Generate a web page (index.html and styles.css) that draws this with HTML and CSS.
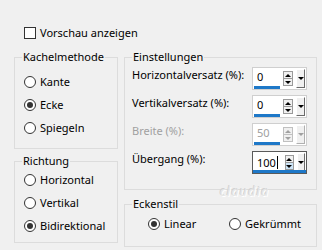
FILE: index.html
```html
<!DOCTYPE html>
<html>
<head>
<meta charset="utf-8">
<link rel="stylesheet" href="styles.css">
</head>
<body>
<div class="dialog">
  <div class="check"><span class="box"></span><span>Vorschau anzeigen</span></div>
  <div class="cols">
    <div class="col left">
      <fieldset class="group g-kachel">
        <legend>Kachelmethode</legend>
        <div class="radio"><span class="rb"></span>Kante</div>
        <div class="radio"><span class="rb on"></span>Ecke</div>
        <div class="radio"><span class="rb"></span>Spiegeln</div>
      </fieldset>
      <fieldset class="group g-richtung">
        <legend>Richtung</legend>
        <div class="radio"><span class="rb"></span>Horizontal</div>
        <div class="radio"><span class="rb"></span>Vertikal</div>
        <div class="radio"><span class="rb on"></span>Bidirektional</div>
      </fieldset>
    </div>
    <div class="col right">
      <fieldset class="group g-einst">
        <legend>Einstellungen</legend>
        <div class="row"><span class="lbl">Horizontalversatz (%):</span>
          <div class="spinner"><span class="field">0</span><span class="spin"><span class="sb up"></span><span class="sb down"></span></span><span class="drop"></span></div>
        </div>
        <div class="row"><span class="lbl">Vertikalversatz (%):</span>
          <div class="spinner"><span class="field">0</span><span class="spin"><span class="sb up"></span><span class="sb down"></span></span><span class="drop"></span></div>
        </div>
        <div class="row"><span class="lbl dis">Breite (%):</span>
          <div class="spinner disabled"><span class="field">50</span><span class="spin"><span class="sb up"></span><span class="sb down"></span></span><span class="drop"></span></div>
        </div>
        <div class="row"><span class="lbl">Übergang (%):</span>
          <div class="spinner focus"><span class="field">100<span class="caret"></span></span><span class="spin"><span class="sb up"></span><span class="sb down hot"></span></span><span class="drop"></span></div>
        </div>
      </fieldset>
      <fieldset class="group g-ecken">
        <legend>Eckenstil</legend>
        <div class="hrow">
          <div class="radio first"><span class="rb on"></span>Linear</div>
          <div class="radio"><span class="rb"></span>Gekrümmt</div>
        </div>
      </fieldset>
    </div>
  </div>
  <span class="watermark">claudia</span>
</div>
</body>
</html>
```
FILE: styles.css
```css
html, body {
  margin: 0;
  padding: 0;
}
body {
  width: 322px;
  height: 250px;
  overflow: hidden;
  background: #f0f0f0;
  font-family: "Noto Sans", sans-serif;
  font-size: 11px;
  color: #000;
}
.dialog {
  position: relative;
  padding: 27px 0 0 14px;
}
.check {
  display: flex;
  align-items: center;
  gap: 4px;
  margin-left: 10px;
  height: 12px;
  line-height: 12px;
}
.box {
  width: 10px;
  height: 10px;
  border: 1px solid #333;
  background: #fff;
}
.cols {
  display: flex;
  gap: 6px;
  margin-top: 11px;
}
.col {
  display: flex;
  flex-direction: column;
}
.left { width: 104px; gap: 5px; }
.right { width: 193px; gap: 7px; }
.group {
  margin: 0;
  padding: 0;
  border: 1px solid #dcdcdc;
  min-width: 0;
}
.group legend {
  margin-left: 7px;
  padding: 0 1px;
  line-height: 14px;
}
.g-kachel { padding: 6px 0 9px 0; }
.g-richtung { padding: 0 0 5px 0; }
.g-kachel .radio, .g-richtung .radio { margin-left: 9px; }
.radio {
  display: flex;
  align-items: center;
  gap: 4px;
  height: 23px;
}
.rb {
  box-sizing: border-box;
  width: 12px;
  height: 12px;
  border: 1px solid #333;
  border-radius: 50%;
  background: #fff;
  display: flex;
  align-items: center;
  justify-content: center;
  flex: none;
}
.rb.on::after {
  content: "";
  width: 6px;
  height: 6px;
  border-radius: 50%;
  background: #333;
}
.g-einst { padding: 3px 9px 10px 0; }
.row {
  display: flex;
  justify-content: space-between;
  align-items: flex-start;
  height: 28px;
  padding-left: 7px;
}
.lbl { line-height: 16px; }
.lbl.dis { color: #a0a0a0; }
.spinner {
  box-sizing: border-box;
  width: 55px;
  height: 23px;
  border: 1px solid #cfcfcf;
  background: #fff;
  display: flex;
  align-items: stretch;
  position: relative;
}
.field {
  width: 27px;
  margin-left: 1px;
  padding-left: 3px;
  box-sizing: border-box;
  line-height: 18px;
  border-bottom: 3px solid #1e78c8;
  display: flex;
  align-items: center;
}
.spin {
  width: 10px;
  margin: 3px 0 3px 3px;
  display: flex;
  flex-direction: column;
  border: 1px solid #9a9a9a;
  box-sizing: border-box;
  height: 15px;
}
.sb {
  flex: 1;
  background: #f0f0f0;
  display: flex;
  align-items: center;
  justify-content: center;
}
.sb.up { border-bottom: 1px solid #9a9a9a; }
.sb.up::after {
  content: "";
  border-left: 3px solid transparent;
  border-right: 3px solid transparent;
  border-bottom: 3px solid #000;
}
.sb.down::after {
  content: "";
  border-left: 3px solid transparent;
  border-right: 3px solid transparent;
  border-top: 3px solid #000;
}
.drop {
  width: 9px;
  margin: 1px 1px 1px 3px;
  box-sizing: border-box;
  background: #f0f0f0;
  border-top: 1px solid #fff;
  border-left: 1px solid #fff;
  border-right: 1px solid #6a6a6a;
  border-bottom: 1px solid #6a6a6a;
  display: flex;
  align-items: center;
  justify-content: center;
}
.drop::after {
  content: "";
  border-left: 3px solid transparent;
  border-right: 3px solid transparent;
  border-top: 3px solid #000;
}
.disabled .field { color: #a0a0a0; }
.disabled .sb.up::after { border-bottom-color: #a0a0a0; }
.disabled .sb.down::after, .disabled .drop::after { border-top-color: #a0a0a0; }
.disabled .spin { border-color: #c0c0c0; }
.disabled .sb.up { border-bottom-color: #c0c0c0; }
.disabled .drop { border-right-color: #b0b0b0; border-bottom-color: #b0b0b0; }
.focus { border-color: #5a5a5a; }
.focus .field { width: auto; flex: none; border-bottom: none; }
.focus::after {
  content: "";
  position: absolute;
  left: 0;
  right: 0;
  bottom: 0;
  height: 3px;
  background: #1e78c8;
}
.focus .spin { margin-left: 7px; }
.sb.hot { background: #cce4f7; }
.caret {
  display: inline-block;
  width: 1px;
  height: 13px;
  background: #000;
  margin-left: 1px;
}
.g-ecken { padding: 1px 0 11px 0; }
.hrow { display: flex; padding-left: 23px; }
.radio.first { width: 81px; }
.watermark {
  position: absolute;
  left: 220px;
  top: 185px;
  font-size: 12px;
  line-height: 14px;
  font-style: italic;
  color: #e6e6e6;
  text-shadow: 1px 1px 0 #fff, -1px -1px 0 #d2d2d2;
  letter-spacing: 1.5px;
}
```
